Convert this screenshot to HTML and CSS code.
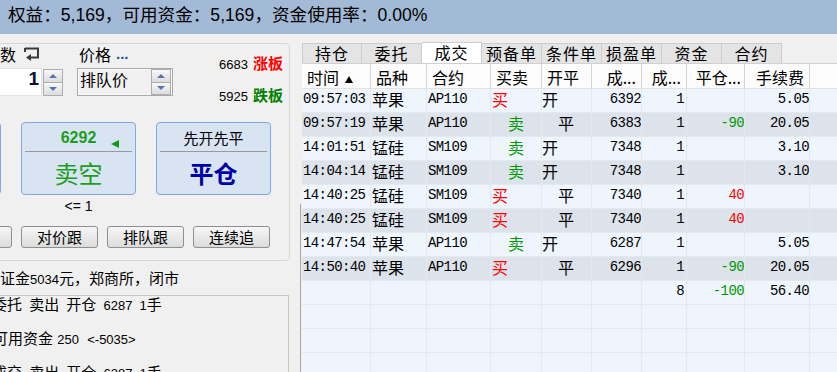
FILE: index.html
```html
<!DOCTYPE html>
<html lang="zh-CN">
<head>
    <meta charset="UTF-8">
    <meta name="viewport" content="width=device-width, initial-scale=1.0">
    <title>交易下单 - 成交</title>
    <link rel="stylesheet" href="styles.css">
</head>
<body>
    <div class="topbar">权益：5,169，可用资金：5,169，资金使用率：0.00%</div>
    <div class="main">
        <div class="left">
            <div class="group">
                <div class="order-row">
                    <div class="qty">
                        <div class="label">手数
                            <svg class="enter" width="17" height="14" viewBox="0 0 17 14">
                                <path d="M2 1.5 H15 V10.5 H7" fill="none" stroke="#3a3a3a" stroke-width="2"/>
                                <path d="M2 1 V5" fill="none" stroke="#3a3a3a" stroke-width="2"/>
                                <path d="M3 10.5 L8 7 L8 14 Z" fill="#3a3a3a"/>
                            </svg>
                        </div>
                        <div class="field">
                            <div class="qty-input">1</div>
                            <div class="spin"><span class="up"></span><span class="down"></span></div>
                        </div>
                    </div>
                    <div class="price">
                        <div class="label">价格<span class="dots">...</span></div>
                        <div class="combo">
                            <span class="combo-text">排队价</span>
                            <div class="spin"><span class="up"></span><span class="down"></span></div>
                        </div>
                    </div>
                    <div class="limits">
                        <div><span class="num">6683</span><b class="limit red">涨板</b></div>
                        <div><span class="num">5925</span><b class="limit green">跌板</b></div>
                    </div>
                </div>

                <div class="trade-row">
                    <div class="trade-btn">
                        <div class="trade-top"><span class="last buy">6296</span></div>
                        <div class="sep"></div>
                        <div class="trade-main buy">买多</div>
                    </div>
                    <div class="trade-btn">
                        <div class="trade-top"><span class="last sell arrow">6292</span></div>
                        <div class="sep"></div>
                        <div class="trade-main sell">卖空</div>
                    </div>
                    <div class="trade-btn">
                        <div class="trade-top cn">先开先平</div>
                        <div class="sep"></div>
                        <div class="trade-main close">平仓</div>
                    </div>
                </div>
                <div class="caption-row">
                    <span></span>
                    <span>&lt;= 1</span>
                    <span></span>
                </div>

                <div class="follow-row">
                    <div class="follow-btn">超价跟</div>
                    <div class="follow-btn">对价跟</div>
                    <div class="follow-btn">排队跟</div>
                    <div class="follow-btn">连续追</div>
                </div>
            </div>

            <div class="margin-info">保证金<span class="n">5034</span>元，郑商所，闭市</div>

            <div class="log-box">
                <div class="log-line">委托 卖出 开仓 <span class="n">6287</span> <span class="n">1</span>手</div>
                <div class="log-line tight">可用资金 <span class="n">250</span>&nbsp; <span class="n">&lt;-5035&gt;</span></div>
                <div class="log-line">成交 卖出 开仓 <span class="n">6287</span> <span class="n">1</span>手</div>
            </div>
        </div>

        <div class="right">
            <div class="tabs">
                <div class="tab">持仓</div>
                <div class="tab">委托</div>
                <div class="tab active">成交</div>
                <div class="tab">预备单</div>
                <div class="tab">条件单</div>
                <div class="tab">损盈单</div>
                <div class="tab">资金</div>
                <div class="tab">合约</div>
            </div>
            <div class="grid">
                <div class="row head">
                    <div class="c">时间<svg class="sort" width="8" height="7" viewBox="0 0 8 7"><path d="M4 0 L8 7 L0 7 Z" fill="#000"/></svg></div>
                    <div class="c">品种</div>
                    <div class="c">合约</div>
                    <div class="c">买卖</div>
                    <div class="c">开平</div>
                    <div class="c r">成...</div>
                    <div class="c r">成...</div>
                    <div class="c r pl-h">平仓...</div>
                    <div class="c r">手续费</div>
                    <div class="c"></div>
                </div>

                <div class="row">
                    <div class="c t">09:57:03</div><div class="c cn v">苹果</div><div class="c k">AP110</div>
                    <div class="c cn bs red">买</div><div class="c cn oc">开</div>
                    <div class="c px">6392</div><div class="c qt">1</div><div class="c pl"></div><div class="c fee">5.05</div><div class="c"></div>
                </div>
                <div class="row alt">
                    <div class="c t">09:57:19</div><div class="c cn v">苹果</div><div class="c k">AP110</div>
                    <div class="c cn bs in green">卖</div><div class="c cn oc in">平</div>
                    <div class="c px">6383</div><div class="c qt">1</div><div class="c pl green">-90</div><div class="c fee">20.05</div><div class="c"></div>
                </div>
                <div class="row">
                    <div class="c t">14:01:51</div><div class="c cn v">锰硅</div><div class="c k">SM109</div>
                    <div class="c cn bs in green">卖</div><div class="c cn oc">开</div>
                    <div class="c px">7348</div><div class="c qt">1</div><div class="c pl"></div><div class="c fee">3.10</div><div class="c"></div>
                </div>
                <div class="row alt">
                    <div class="c t">14:04:14</div><div class="c cn v">锰硅</div><div class="c k">SM109</div>
                    <div class="c cn bs in green">卖</div><div class="c cn oc">开</div>
                    <div class="c px">7348</div><div class="c qt">1</div><div class="c pl"></div><div class="c fee">3.10</div><div class="c"></div>
                </div>
                <div class="row">
                    <div class="c t">14:40:25</div><div class="c cn v">锰硅</div><div class="c k">SM109</div>
                    <div class="c cn bs red">买</div><div class="c cn oc in">平</div>
                    <div class="c px">7340</div><div class="c qt">1</div><div class="c pl red">40</div><div class="c fee"></div><div class="c"></div>
                </div>
                <div class="row alt">
                    <div class="c t">14:40:25</div><div class="c cn v">锰硅</div><div class="c k">SM109</div>
                    <div class="c cn bs red">买</div><div class="c cn oc in">平</div>
                    <div class="c px">7340</div><div class="c qt">1</div><div class="c pl red">40</div><div class="c fee"></div><div class="c"></div>
                </div>
                <div class="row">
                    <div class="c t">14:47:54</div><div class="c cn v">苹果</div><div class="c k">AP110</div>
                    <div class="c cn bs in green">卖</div><div class="c cn oc">开</div>
                    <div class="c px">6287</div><div class="c qt">1</div><div class="c pl"></div><div class="c fee">5.05</div><div class="c"></div>
                </div>
                <div class="row alt">
                    <div class="c t">14:50:40</div><div class="c cn v">苹果</div><div class="c k">AP110</div>
                    <div class="c cn bs red">买</div><div class="c cn oc in">平</div>
                    <div class="c px">6296</div><div class="c qt">1</div><div class="c pl green">-90</div><div class="c fee">20.05</div><div class="c"></div>
                </div>
                <div class="row">
                    <div class="c"></div><div class="c"></div><div class="c"></div><div class="c"></div><div class="c"></div>
                    <div class="c"></div><div class="c qt">8</div><div class="c pl green">-100</div><div class="c fee">56.40</div><div class="c"></div>
                </div>
                <div class="row">
                    <div class="c"></div><div class="c"></div><div class="c"></div><div class="c"></div><div class="c"></div>
                    <div class="c"></div><div class="c"></div><div class="c"></div><div class="c"></div><div class="c"></div>
                </div>
                <div class="row">
                    <div class="c"></div><div class="c"></div><div class="c"></div><div class="c"></div><div class="c"></div>
                    <div class="c"></div><div class="c"></div><div class="c"></div><div class="c"></div><div class="c"></div>
                </div>
                <div class="row">
                    <div class="c"></div><div class="c"></div><div class="c"></div><div class="c"></div><div class="c"></div>
                    <div class="c"></div><div class="c"></div><div class="c"></div><div class="c"></div><div class="c"></div>
                </div>
            </div>
        </div>
    </div>
</body>
</html>
```

FILE: styles.css
```css
body {
    margin: 0;
    width: 837px;
    height: 372px;
    overflow: hidden;
    background-color: #f0f0f0;
    color: #000;
    font-family: "Liberation Sans", "Noto Sans CJK SC", sans-serif;
}
.topbar {
    height: 34px;
    box-sizing: border-box;
    padding: 0 0 3px 8px;
    background-color: #a2bad5;
    font-size: 17.6px;
    line-height: 31px;
    white-space: nowrap;
}
.main {
    display: flex;
    height: 338px;
}
.left {
    width: 302px;
    flex: none;
    overflow: hidden;
    /* splitter line below the order box */
    background: linear-gradient(#a6a6a6, #a6a6a6) no-repeat calc(100% - 1px) 100% / 1px calc(100% - 170px);
}
.right {
    flex: 1;
    overflow: hidden;
    padding-top: 8px;
}

/* order group box */
.group {
    margin: 9px 0 0 -140px;
    width: 430px;
    height: 218px;
    box-sizing: border-box;
    border: 1px solid #d7d7d7;
    border-radius: 4px;
    padding-right: 18px;
}
.order-row {
    display: flex;
    justify-content: flex-end;
    margin-right: -12px;
    height: 52px;
}
.qty {
    width: 84px;
}
.price {
    width: 96px;
    margin-left: 13px;
}
.label {
    height: 20px;
    line-height: 20px;
    font-family: "Noto Sans CJK SC", sans-serif;
    font-size: 16px;
    display: flex;
    align-items: center;
    white-space: nowrap;
}
.qty .label {
    padding-left: 4px;
}
.price .label {
    padding-left: 2px;
}
.enter {
    margin-left: 7px;
}
.dots {
    margin-left: 5px;
    color: #1c4fa0;
    font-family: "Liberation Sans", sans-serif;
    font-weight: bold;
    font-size: 15px;
}
.field {
    display: flex;
    margin-top: 4px;
    height: 28px;
}
.qty-input {
    width: 62px;
    box-sizing: border-box;
    background-color: #fff;
    border: 1px solid #e3e3e3;
    text-align: right;
    padding: 1px 2px 0 0;
    font: bold 19px/18px "Liberation Sans", sans-serif;
    color: #101030;
}
.spin {
    width: 20px;
    margin: 1px 0 0 1px;
    display: flex;
    flex-direction: column;
}
.spin span {
    flex: 1;
    border: 1px solid #adadad;
    background: linear-gradient(#f8f8f8, #dcdcdc);
    display: flex;
    align-items: center;
    justify-content: center;
}
.spin span + span {
    border-top: none;
}
.spin .up::before {
    content: "";
    border-left: 4px solid transparent;
    border-right: 4px solid transparent;
    border-bottom: 4px solid #5474b4;
}
.spin .down::before {
    content: "";
    border-left: 4px solid transparent;
    border-right: 4px solid transparent;
    border-top: 4px solid #5474b4;
}
.combo {
    margin-top: 4px;
    height: 28px;
    box-sizing: border-box;
    border: 1px solid #a9a9a9;
    box-shadow: inset 0 0 0 1px #fafafa;
    display: flex;
    justify-content: space-between;
}
.combo-text {
    padding: 1px 0 0 2px;
    font-family: "Noto Sans CJK SC", sans-serif;
    font-size: 16px;
    line-height: 18px;
}
.combo .spin {
    margin: 0 1px 0 0;
}
.limits {
    width: 64px;
    margin-left: 46px;
    padding-top: 4px;
    line-height: 30px;
    white-space: nowrap;
}
.num {
    font-size: 13px;
}
.limit {
    margin-left: 5px;
    font-family: "Noto Sans CJK SC", sans-serif;
    font-size: 15px;
    font-weight: bold;
}
.red {
    color: #f00;
}
.green {
    color: #009a00;
}
.limit.green {
    color: #008000;
}

/* big trade buttons */
.trade-row {
    display: flex;
    justify-content: flex-end;
    gap: 20px;
    margin-top: 26px;
}
.trade-btn {
    width: 115px;
    height: 73px;
    box-sizing: border-box;
    border: 1px solid #7eaadd;
    border-radius: 4px;
    background-color: #d8e4f2;
    display: flex;
    flex-direction: column;
    text-align: center;
}
.trade-top {
    height: 28px;
    line-height: 29px;
    font-size: 15px;
}
.trade-top.cn {
    font-family: "Noto Sans CJK SC", sans-serif;
}
.last {
    position: relative;
    font-weight: bold;
    font-size: 16px;
}
.last.arrow::after {
    content: "";
    position: absolute;
    left: calc(100% + 15px);
    top: 11px;
    border-top: 4px solid transparent;
    border-bottom: 4px solid transparent;
    border-right: 8px solid #139b13;
}
.sep {
    height: 1px;
    margin: 0 3px;
    background-color: #9a9a9a;
}
.trade-main {
    flex: 1;
    font-family: "Noto Sans CJK SC", sans-serif;
    font-size: 24px;
    line-height: 41px;
}
.buy {
    color: #e00000;
}
.sell {
    color: #1d9d1d;
}
.close {
    color: #0000a8;
    font-weight: bold;
}
.caption-row {
    display: flex;
    justify-content: flex-end;
    gap: 20px;
    margin-top: 3px;
    height: 16px;
    font-size: 14px;
    line-height: 16px;
}
.caption-row span {
    width: 115px;
    text-align: center;
}
.follow-row {
    display: flex;
    justify-content: flex-end;
    gap: 9px;
    margin: 12px 1px 0 0;
}
.follow-btn {
    width: 77px;
    height: 22px;
    box-sizing: border-box;
    border: 1px solid #8f8f8f;
    border-radius: 3px;
    background: linear-gradient(#f6f6f6, #dcdcdc);
    font-family: "Noto Sans CJK SC", sans-serif;
    font-size: 15px;
    line-height: 20px;
    text-align: center;
}

/* info + log */
.margin-info {
    margin: 8px 0 0 -15px;
    font-size: 15px;
    line-height: 20px;
    white-space: nowrap;
}
.n {
    font-size: 13px;
}
.log-box {
    margin: 5px 0 0 -20px;
    width: 309px;
    height: 120px;
    box-sizing: border-box;
    border: 1px solid #c6c6c6;
    padding: 0 0 0 11px;
    font-size: 15px;
    white-space: nowrap;
    word-spacing: 3px;
}
.log-line {
    line-height: 18px;
    margin-bottom: 15px;
}
.log-line.tight {
    word-spacing: 0;
    padding-left: 1px;
}

/* tabs */
.tabs {
    display: flex;
    align-items: flex-end;
    height: 21px;
}
.tab {
    width: 60px;
    height: 20px;
    box-sizing: border-box;
    border: 1px solid #cdcdcd;
    border-left: none;
    border-bottom: none;
    background-color: #e4e4e4;
    font-family: "Noto Sans CJK SC", sans-serif;
    font-size: 16px;
    letter-spacing: 1px;
    line-height: 19px;
    text-align: center;
}
.tab:first-child {
    border-left: 1px solid #cdcdcd;
}
.tab.active {
    height: 21px;
    background-color: #fff;
}

/* trade grid */
.grid {
    border-top: 1px solid #d0d0d0;
    background-color: #eff5fd;
}
.row {
    display: grid;
    grid-template-columns: 69px 56px 64px 51px 50px 50px 45px 58px 65px 40px;
    height: 24px;
}
.row.alt {
    background-color: #dde3ea;
}
.c {
    box-sizing: border-box;
    border-right: 1px solid #e4e9ef;
    border-bottom: 1px solid #e4e9ef;
    white-space: nowrap;
    overflow: hidden;
    font-family: "Liberation Mono", "Noto Sans CJK SC", monospace;
    font-size: 14px;
    letter-spacing: -0.6px;
    line-height: 20px;
}
.row.head {
    height: 25px;
    background-color: #fcfcfc;
}
.head .c {
    border-right-color: #d6d6d6;
    border-bottom-color: #e2e2e2;
    font-family: "Noto Sans CJK SC", sans-serif;
    font-size: 16px;
    letter-spacing: 0;
    padding: 3px 5px 0;
}
.head .r {
    text-align: right;
}
.head .pl-h {
    padding-right: 3px;
}
.sort {
    margin-left: 6px;
    vertical-align: 1px;
}
.c.cn {
    font-family: "Noto Sans CJK SC", sans-serif;
    font-size: 16px;
    letter-spacing: 0;
}
.t, .v, .k, .bs {
    padding-left: 1px;
}
.bs.in {
    padding-left: 17px;
}
.oc.in {
    padding-left: 16px;
}
.px, .pl, .fee {
    text-align: right;
}
.qt {
    text-align: right;
    padding-right: 2px;
}
```
